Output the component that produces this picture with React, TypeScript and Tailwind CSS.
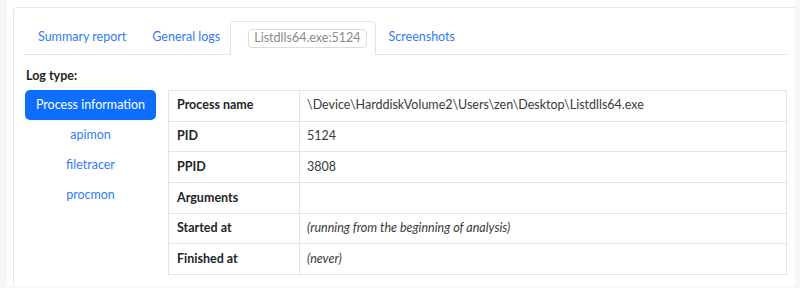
import React from "react";

const rows: { k: string; v: string; italic?: boolean }[] = [
  { k: "Process name", v: "\\Device\\HarddiskVolume2\\Users\\zen\\Desktop\\Listdlls64.exe" },
  { k: "PID", v: "5124" },
  { k: "PPID", v: "3808" },
  { k: "Arguments", v: "" },
  { k: "Started at", v: "(running from the beginning of analysis)", italic: true },
  { k: "Finished at", v: "(never)", italic: true },
];

export default function App() {
  return (
    <div
      className="h-[288px] w-[800px] overflow-hidden bg-[#f7f7f7] pl-[7px] pr-[5px] text-[12.5px] text-[#212529]"
      style={{ fontFamily: "Lato, 'Noto Sans', sans-serif" }}
    >
      <div className="h-[286px] bg-white pl-[6px] pt-[7px]">
        <div className="h-full rounded-tl-[4px] border-l border-t border-[#e6e6e6] pl-[11px] pr-[8px] pt-[13px]">
          {/* tabs */}
          <div className="flex h-[34px] items-end border-b border-[#e3e3e3]">
            <a className="flex h-[33px] items-center px-[13px] text-[#2f7cf6]">Summary report</a>
            <a className="flex h-[33px] items-center pl-[13px] pr-[10px] text-[#2f7cf6]">General logs</a>
            <div className="-mb-px flex h-[34px] items-center rounded-t-[5px] border border-b-white border-[#e3e3e3] bg-white pl-[17px] pr-[8px]">
              <span className="flex h-[19px] items-center rounded-[4px] border border-[#dcdcdc] px-[5px] text-[#8a8a8a]">
                Listdlls64.exe:5124
              </span>
            </div>
            <a className="flex h-[33px] items-center px-[13px] text-[#2f7cf6]">Screenshots</a>
          </div>

          <div className="mt-[12px] pl-px font-bold leading-[18px]">Log type:</div>

          <div className="mt-[5px] flex gap-[12px]">
            <div className="flex w-[131px] flex-col">
              <div className="flex h-[30px] items-center justify-center rounded-[5px] bg-[#0d6efd] text-white">
                Process information
              </div>
              {["apimon", "filetracer", "procmon"].map((t) => (
                <div key={t} className="flex h-[30px] items-center justify-center text-[#2f7cf6]">
                  {t}
                </div>
              ))}
            </div>

            <table className="w-[619px] border-collapse border border-[#e3e3e3]">
              <tbody>
                {rows.map((r) => (
                  <tr key={r.k} className="h-[30.7px]">
                    <td className="w-[131px] border border-[#e3e3e3] px-[8px] py-0 font-bold">{r.k}</td>
                    <td
                      className={
                        "border border-[#e3e3e3] px-[7px] py-0 text-[#3a3a3a]" + (r.italic ? " italic" : "")
                      }
                    >
                      {r.v}
                    </td>
                  </tr>
                ))}
              </tbody>
            </table>
          </div>
        </div>
      </div>
    </div>
  );
}
